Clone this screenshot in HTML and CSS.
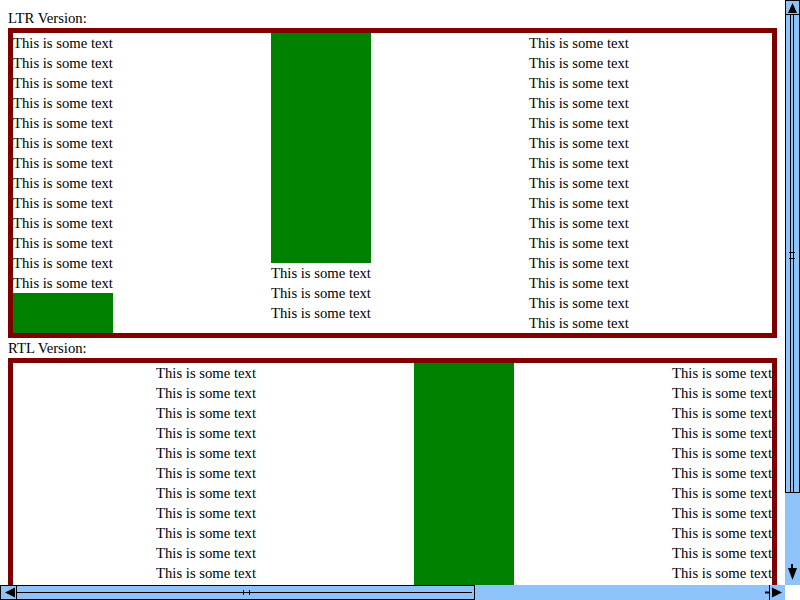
FILE: index.html
```html
<!DOCTYPE html>
<html>
<head>
<meta charset="utf-8">
<link rel="stylesheet" href="styles.css">
</head>
<body>
<div class="page">
  <div class="viewport">
    <div class="label">LTR Version:</div>
    <div class="box">
      <div class="col">
        <div class="line">This is some text</div><div class="line">This is some text</div><div class="line">This is some text</div><div class="line">This is some text</div><div class="line">This is some text</div><div class="line">This is some text</div><div class="line">This is some text</div><div class="line">This is some text</div><div class="line">This is some text</div><div class="line">This is some text</div><div class="line">This is some text</div><div class="line">This is some text</div><div class="line">This is some text</div>
        <div class="green g-short"></div>
      </div>
      <div class="col">
        <div class="green g-tall"></div>
        <div class="line">This is some text</div><div class="line">This is some text</div><div class="line">This is some text</div>
      </div>
      <div class="col">
        <div class="line">This is some text</div><div class="line">This is some text</div><div class="line">This is some text</div><div class="line">This is some text</div><div class="line">This is some text</div><div class="line">This is some text</div><div class="line">This is some text</div><div class="line">This is some text</div><div class="line">This is some text</div><div class="line">This is some text</div><div class="line">This is some text</div><div class="line">This is some text</div><div class="line">This is some text</div><div class="line">This is some text</div><div class="line">This is some text</div>
      </div>
    </div>
    <div class="label">RTL Version:</div>
    <div class="box rtl">
      <div class="col">
        <div class="line">This is some text</div><div class="line">This is some text</div><div class="line">This is some text</div><div class="line">This is some text</div><div class="line">This is some text</div><div class="line">This is some text</div><div class="line">This is some text</div><div class="line">This is some text</div><div class="line">This is some text</div><div class="line">This is some text</div><div class="line">This is some text</div><div class="line">This is some text</div><div class="line">This is some text</div>
        <div class="green g-short"></div>
      </div>
      <div class="col">
        <div class="green g-tall"></div>
        <div class="line">This is some text</div><div class="line">This is some text</div><div class="line">This is some text</div>
      </div>
      <div class="col">
        <div class="line">This is some text</div><div class="line">This is some text</div><div class="line">This is some text</div><div class="line">This is some text</div><div class="line">This is some text</div><div class="line">This is some text</div><div class="line">This is some text</div><div class="line">This is some text</div><div class="line">This is some text</div><div class="line">This is some text</div><div class="line">This is some text</div><div class="line">This is some text</div><div class="line">This is some text</div><div class="line">This is some text</div><div class="line">This is some text</div>
      </div>
    </div>
  </div>
  <div class="vscroll">
    <svg width="15" height="585" viewBox="0 0 15 585">
      <rect x="0" y="0" width="15" height="585" fill="#8dc3f9"/>
      <rect x="0.5" y="0.5" width="14" height="14" fill="none" stroke="#000"/>
      <polygon points="7.5,3 3,13 12,13" fill="#000"/>
      <rect x="0.5" y="14.5" width="14" height="478" fill="none" stroke="#000"/>
      <line x1="5.5" y1="15" x2="5.5" y2="492" stroke="#000"/>
      <line x1="8.5" y1="15" x2="8.5" y2="492" stroke="#000"/>
      <line x1="4" y1="252.5" x2="10" y2="252.5" stroke="#000"/>
      <line x1="4" y1="258.5" x2="10" y2="258.5" stroke="#000"/>
      <rect x="6" y="564" width="2" height="4" fill="#000"/>
      <polygon points="3,568 12,568 7.5,580" fill="#000"/>
    </svg>
  </div>
  <div class="hscroll">
    <svg width="785" height="15" viewBox="0 0 785 15">
      <rect x="0" y="0" width="785" height="15" fill="#8dc3f9"/>
      <rect x="0.5" y="0.5" width="16" height="14" fill="none" stroke="#000"/>
      <polygon points="5,7.5 15,2.5 15,12.5" fill="#000"/>
      <rect x="16.5" y="0.5" width="458" height="14" fill="none" stroke="#000"/>
      <line x1="17" y1="7.5" x2="472" y2="7.5" stroke="#000"/>
      <line x1="243.5" y1="5" x2="243.5" y2="10" stroke="#000"/>
      <line x1="249.5" y1="5" x2="249.5" y2="10" stroke="#000"/>
      <line x1="769.5" y1="0" x2="769.5" y2="15" stroke="#000"/>
      <rect x="765" y="6.5" width="5" height="2" fill="#000"/>
      <polygon points="772,2.5 782,7.5 772,12.5" fill="#000"/>
    </svg>
  </div>
  <div class="corner"></div>
</div>
</body>
</html>
```
FILE: styles.css
```css
html, body {
  margin: 0;
  padding: 0;
  background: #fff;
  overflow: hidden;
}
.page {
  display: grid;
  grid-template-columns: 785px 15px;
  grid-template-rows: 585px 15px;
  width: 800px;
  height: 600px;
}
.viewport {
  overflow: hidden;
  padding: 8px;
  font-family: "Liberation Serif", "Times New Roman", serif;
  font-size: 14.7px;
  line-height: 20px;
  color: #000;
}
.label {
  height: 20px;
  white-space: nowrap;
}
.box {
  border: 5px solid #800000;
  display: flex;
  gap: 15px;
  align-items: flex-start;
}
.box.rtl {
  direction: rtl;
}
.col {
  width: 243px;
  flex: none;
}
.line {
  height: 20px;
  white-space: nowrap;
}
.green {
  width: 100px;
  background: #008000;
}
.g-short {
  height: 40px;
}
.g-tall {
  height: 230px;
}
.vscroll, .hscroll {
  line-height: 0;
}
.vscroll svg, .hscroll svg {
  display: block;
}
.corner {
  background: #fff;
}
```
